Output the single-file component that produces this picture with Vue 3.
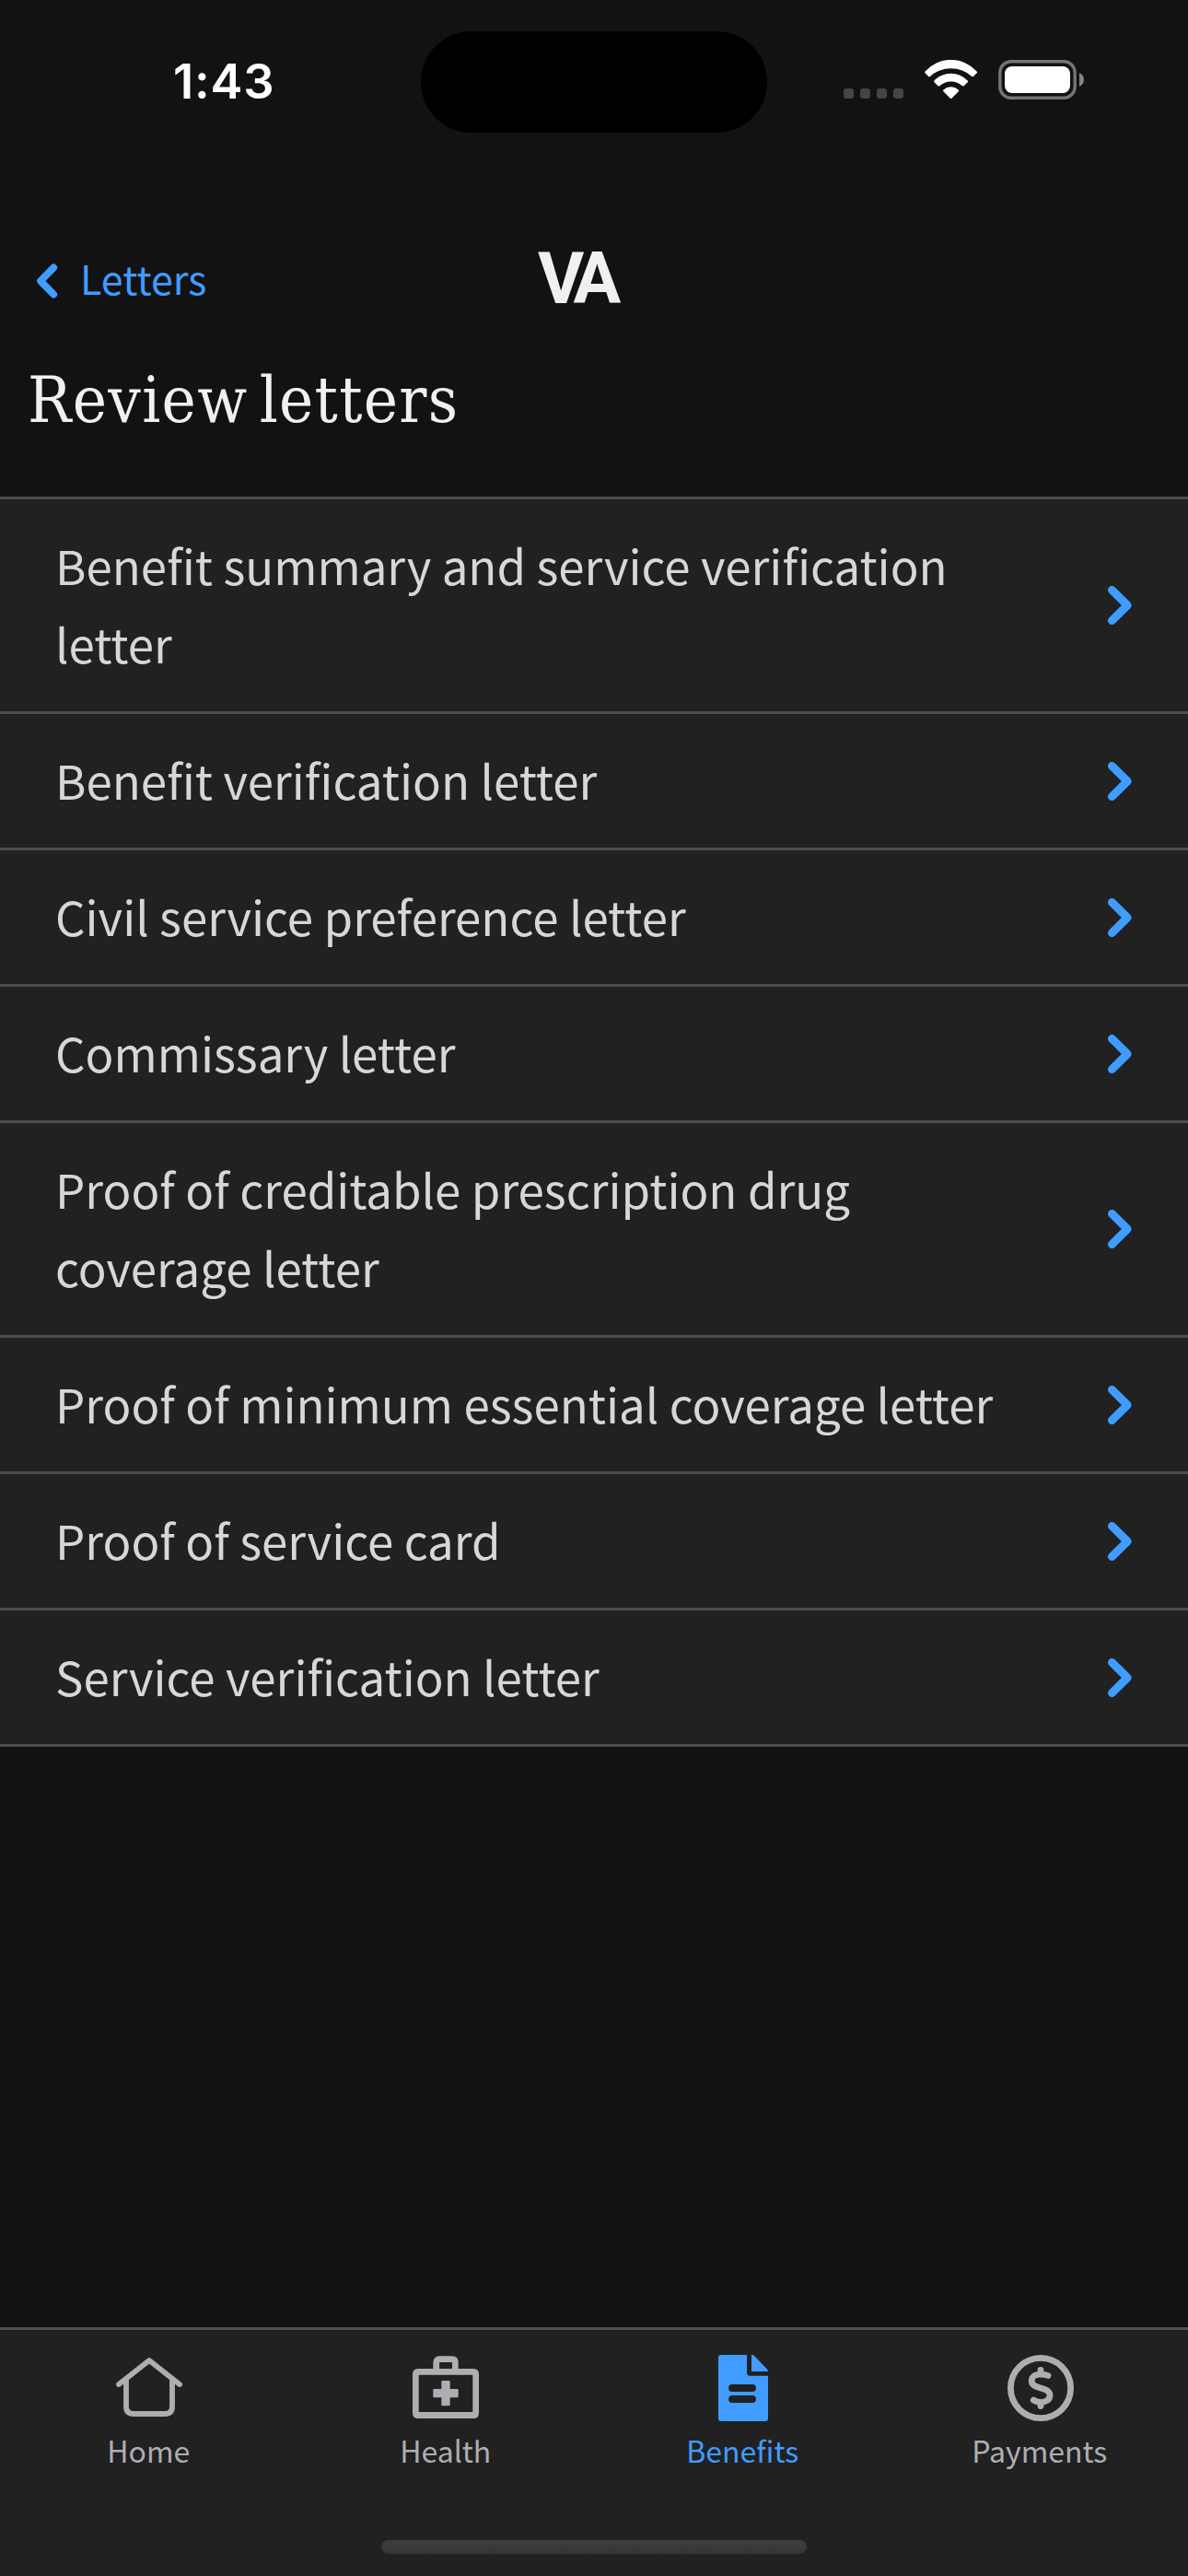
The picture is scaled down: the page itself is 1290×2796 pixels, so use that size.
<script setup>
const letters = [
  'Benefit summary and service verification letter',
  'Benefit verification letter',
  'Civil service preference letter',
  'Commissary letter',
  'Proof of creditable prescription drug coverage letter',
  'Proof of minimum essential coverage letter',
  'Proof of service card',
  'Service verification letter',
]
const tabs = [
  { id: 'home', label: 'Home' },
  { id: 'health', label: 'Health' },
  { id: 'benefits', label: 'Benefits', active: true },
  { id: 'payments', label: 'Payments' },
]
</script>

<template>
  <div class="screen">
    <header class="status">
      <span class="time">1:43</span>
      <span class="island"></span>
      <div class="indicators">
        <div class="dots"><i v-for="n in 4" :key="n"></i></div>
        <svg class="wifi" width="58" height="43" viewBox="0 0 58 43" fill="#fff">
          <path d="M0.600 12.400A37.500 37.500 0 0 1 56.600 12.400Q57.600 13.300 56.700 14.200L53 17.900Q52.200 18.700 51.300 17.900A34.300 34.300 0 0 0 5.900 17.900Q5 18.700 4.200 17.900L0.500 14.200Q-0.400 13.300 0.600 12.400Z" />
          <path d="M10.500 22.400A25 25 0 0 1 46.700 22.400Q47.600 23.300 46.700 24.200L42.700 28.200Q41.800 29 40.900 28.200A18.400 18.400 0 0 0 16.300 28.200Q15.400 29 14.500 28.200L10.500 24.200Q9.600 23.300 10.500 22.400Z" />
          <path d="M20.400 32.400A12.500 12.500 0 0 1 36.800 32.400Q37.700 33.300 36.800 34.200L29.400 41.700Q28.600 42.400 27.800 41.700L20.400 34.200Q19.500 33.300 20.400 32.400Z" />
        </svg>
        <svg class="battery" width="94" height="43" viewBox="0 0 94 43">
          <rect x="1.800" y="1.800" width="81.400" height="39.400" rx="12" fill="none" stroke="#747474" stroke-width="3.400" />
          <rect x="7" y="7" width="71" height="29" rx="8" fill="#fff" />
          <path d="M88 14Q93 16.500 93 21.500T88 29Z" fill="#848484" />
        </svg>
      </div>
    </header>

    <nav class="topbar">
      <a class="back">
        <svg width="24" height="38" viewBox="0 0 24 38">
          <path d="M19.200 4.500L5 19L19.200 33.500" />
        </svg>
        <span>Letters</span>
      </a>
      <span class="logo">VA</span>
      <span></span>
    </nav>

    <h1>Review letters</h1>

    <ul class="list">
      <li v-for="letter in letters" :key="letter">
        <span class="name">{{ letter }}</span>
        <svg width="28" height="44" viewBox="0 0 28 44">
          <path d="M5.400 5.400L22.200 22L5.400 38.600" />
        </svg>
      </li>
    </ul>

    <footer class="tabbar">
      <div class="tabs">
        <a v-for="tab in tabs" :key="tab.id" :class="[tab.id, { active: tab.active }]">
          <svg v-if="tab.id === 'home'" width="72" height="72" viewBox="0 0 72 72" fill="none" stroke="currentColor" stroke-width="5.800" stroke-linecap="round" stroke-linejoin="round">
            <path d="M3 32L36 6L69 32" />
            <path d="M11 27V56Q11 64 19 64H53Q61 64 61 56V27" />
          </svg>
          <svg v-else-if="tab.id === 'health'" width="72" height="72" viewBox="0 0 72 72">
            <path fill="currentColor" fill-rule="evenodd" d="M6 15H66Q72 15 72 21V63Q72 69 66 69H6Q0 69 0 63V21Q0 15 6 15ZM7.500 21.700Q6.700 21.700 6.700 22.500V61.300Q6.700 62.100 7.500 62.100H64.500Q65.300 62.100 65.300 61.300V22.500Q65.300 21.700 64.500 21.700Z" />
            <path d="M25.700 18V8Q25.700 4.700 29 4.700H43Q46.300 4.700 46.300 8V18" fill="none" stroke="currentColor" stroke-width="6.700" />
            <path d="M32.500 28H39.500Q40.700 28 40.700 29.200V37H48.500Q49.700 37 49.700 38.200V45Q49.700 46.300 48.500 46.300H40.700V54Q40.700 55.200 39.500 55.200H32.500Q31.300 55.200 31.300 54V46.300H23.500Q22.300 46.300 22.300 45V38.200Q22.300 37 23.500 37H31.300V29.200Q31.300 28 32.500 28Z" fill="currentColor" />
          </svg>
          <svg v-else-if="tab.id === 'benefits'" width="72" height="72" viewBox="0 0 72 72">
            <path d="M12 0H40V19Q40 22.700 43.500 22.700H63V69Q63 72 60 72H12Q9 72 9 69V3Q9 0 12 0ZM45 0H46Q47 0 48 1L62 15.500Q63 16.500 63 18H45Z" fill="currentColor" />
            <path d="M24 36H46M24 48H46" stroke="#212121" stroke-width="7.800" stroke-linecap="round" />
          </svg>
          <svg v-else width="72" height="72" viewBox="0 0 72 72" fill="none" stroke="currentColor" stroke-width="6.800" stroke-linecap="round">
            <circle cx="36" cy="36" r="32.600" />
            <path d="M36 16.400V20M36 52V55.600" />
            <path d="M44 22.500Q41 21.200 36 21.200C29 21.200 26.200 24.500 26.200 28C26.200 38.500 46 33.500 46 44C46 48.500 42 51.300 36 51.300Q31.500 51.300 28.300 49.200" />
          </svg>
          <span>{{ tab.label }}</span>
        </a>
      </div>
      <div class="indicator"></div>
    </footer>
  </div>
</template>

<style>
html,
body {
  margin: 0;
  background: #121212;
}
</style>

<style scoped>
.screen {
  display: flex;
  flex-direction: column;
  width: 1290px;
  height: 2796px;
  overflow: hidden;
  background: #121212;
  color: #d6d7d9;
  font-family: "Noto Sans CJK SC", "Noto Sans", sans-serif;
}
.status {
  display: grid;
  grid-template-columns: 457px 376px 457px;
  height: 252px;
  align-items: start;
}
.time {
  margin: 57px 0 0 188px;
  font: 600 52.500px/63px Inter, sans-serif;
  letter-spacing: 0.800px;
  color: #fff;
}
.island {
  height: 110px;
  margin-top: 34px;
  border-radius: 55px;
  background: #000;
}
.indicators {
  display: flex;
  margin: 65px 0 0 83px;
}
.dots {
  display: flex;
  gap: 7px;
  margin: 31px 23px 0 0;
}
.dots i {
  width: 11px;
  height: 11px;
  border-radius: 3px;
  background: #444;
}
.battery {
  margin-left: 22px;
}
.topbar {
  display: grid;
  grid-template-columns: 580px 100px 1fr;
  height: 108px;
  align-items: center;
}
.back {
  display: flex;
  align-items: center;
  padding-left: 39px;
  color: #409cff;
  font-size: 43px;
  line-height: 64px;
}
.back svg {
  margin-bottom: 3px;
}
.back span {
  margin: 0 0 11px 24px;
}
.back path,
.list path {
  fill: none;
  stroke: #409cff;
  stroke-width: 8.800px;
  stroke-linecap: round;
  stroke-linejoin: round;
}
.back path {
  stroke-width: 7.800px;
}
.logo {
  margin: 0 0 6px 4px;
  font: 700 77px/80px Roboto, sans-serif;
  color: #f0f0f0;
  letter-spacing: -9px;
}
h1 {
  height: 179px;
  margin: 0;
  padding-left: 30px;
  box-sizing: border-box;
  padding-top: 24px;
  font: 400 70px/100px "DejaVu Serif Condensed", "DejaVu Serif", serif;
  letter-spacing: 1.300px;
  word-spacing: -9px;
  color: #f0f0f0;
}
.list {
  margin: 0;
  padding: 0;
  list-style: none;
  border-top: 3px solid #4d4d4d;
  background: #212121;
}
.list li {
  display: flex;
  align-items: center;
  justify-content: space-between;
  padding: 30px 60px;
  border-bottom: 3px solid #4d4d4d;
}
.name {
  width: 1040px;
  margin: -1px 0 1px;
  font-size: 51px;
  line-height: 85px;
}
.tabbar {
  margin-top: auto;
  height: 270px;
  box-sizing: border-box;
  border-top: 3px solid #4d4d4d;
  background: #212121;
  color: #aeaeb2;
}
.tabs {
  display: grid;
  grid-template-columns: repeat(4, 1fr);
  height: 208px;
  padding-top: 27px;
  box-sizing: border-box;
}
.tabs a {
  display: flex;
  flex-direction: column;
  align-items: center;
}
.tabs svg {
  margin-left: 2px;
}
.tabs .health svg {
  margin-left: 0;
}
.tabs span {
  margin-top: 7px;
  font-size: 32px;
  line-height: 48px;
}
.tabs .active {
  color: #409cff;
}
.indicator {
  width: 462px;
  height: 15px;
  margin: 20px auto 0;
  border-radius: 8px;
  background: linear-gradient(#3e3e3e, #353535);
}
</style>
